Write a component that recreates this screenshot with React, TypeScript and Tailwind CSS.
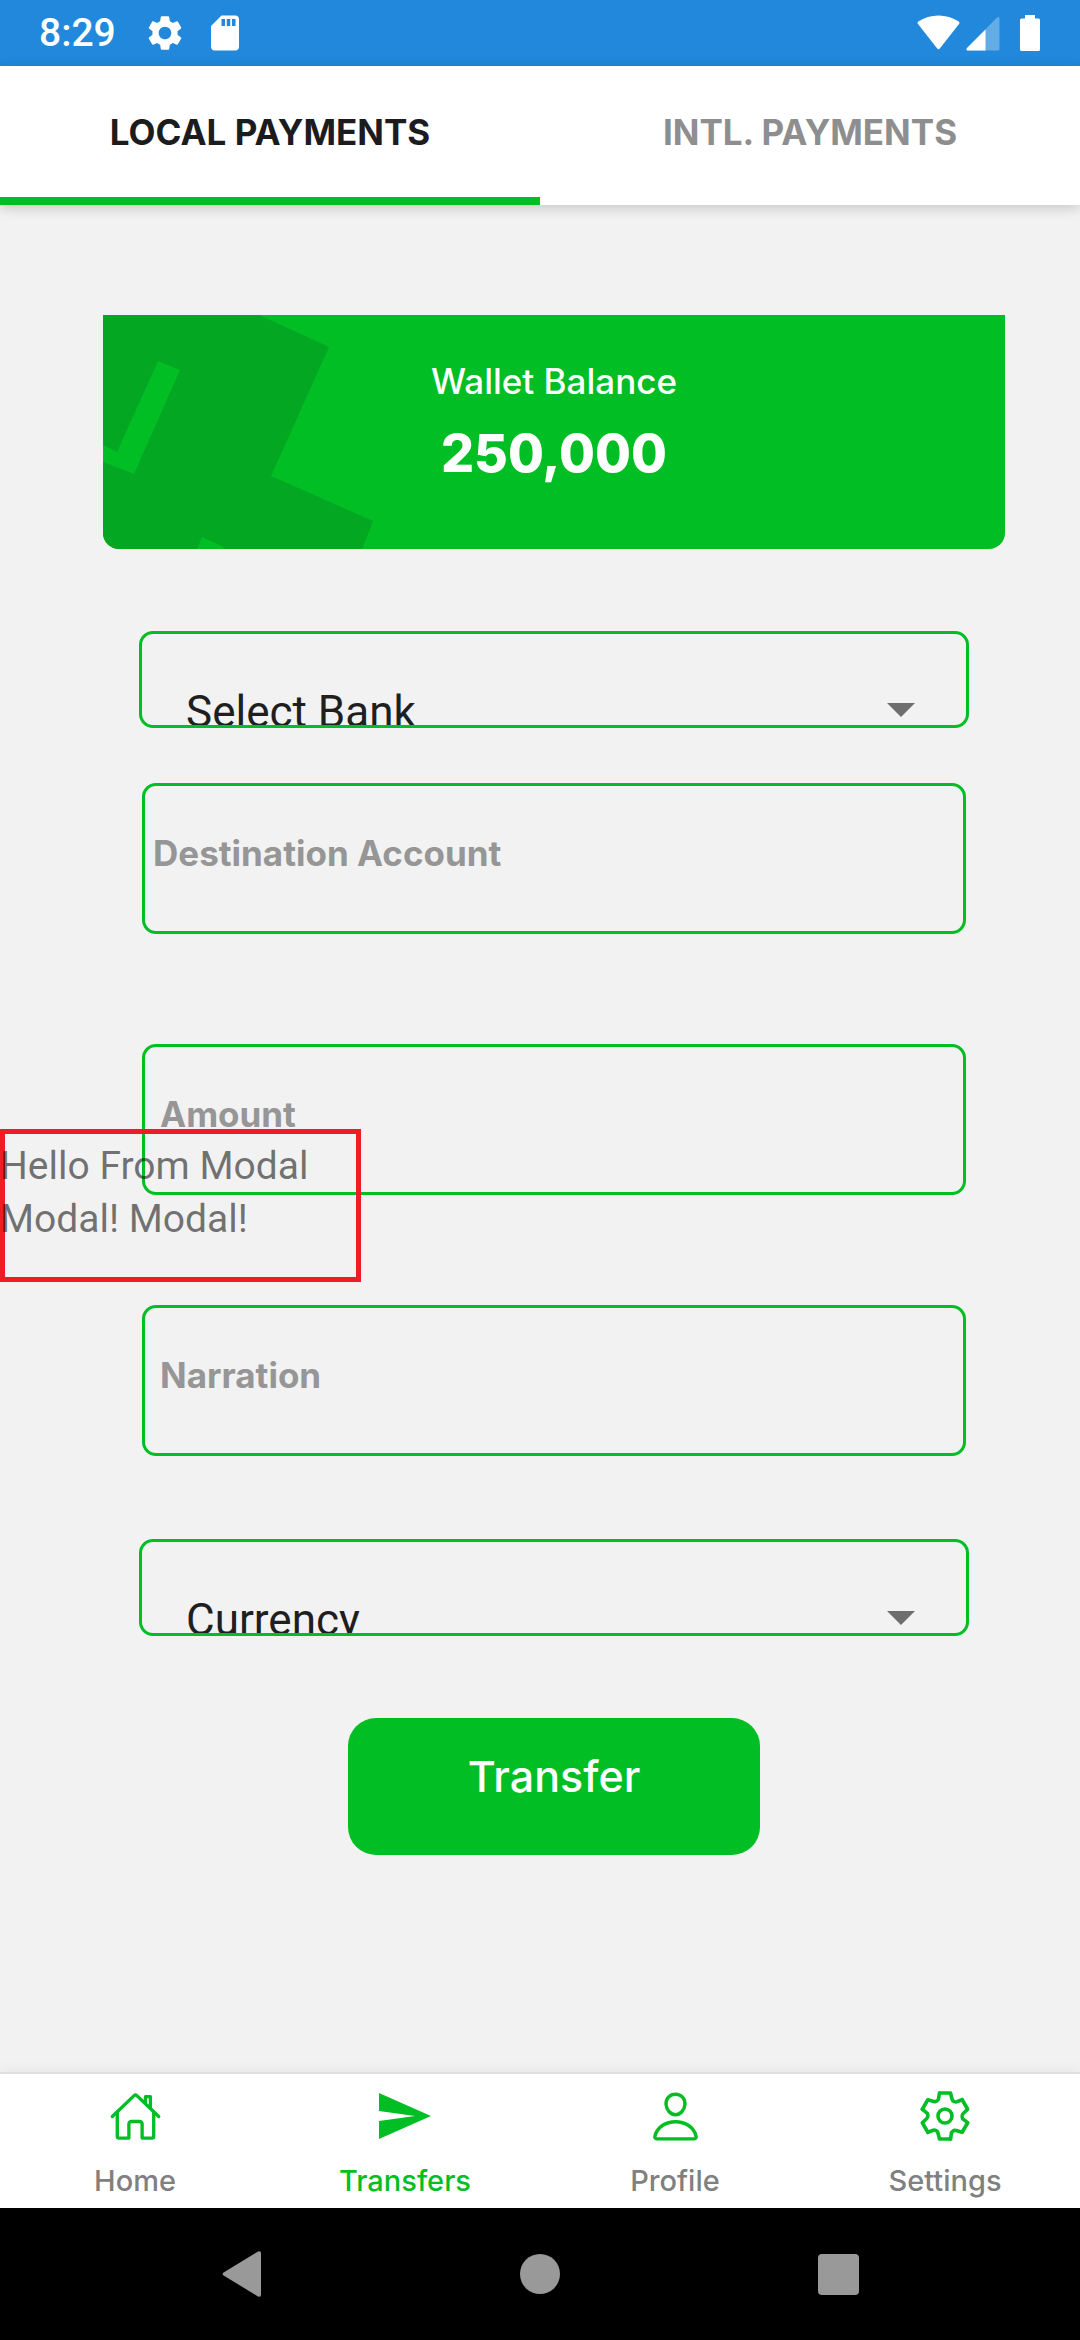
import { useState, type ReactNode } from "react";
import { IoHomeOutline, IoPersonOutline } from "react-icons/io5";
import { MdSdCard, MdSettings } from "react-icons/md";

function StatusBar() {
  return (
    <header className="flex h-[66px] items-center bg-[#2188dc] pr-[40px] pl-[39px] text-white">
      <span className="font-[Roboto] text-[39px] leading-none font-medium">8:29</span>
      <MdSettings className="ml-[28px] size-[42px]" aria-hidden="true" />
      <MdSdCard className="ml-[18px] size-[42px]" aria-hidden="true" />
      <div className="ml-auto flex items-center gap-[6px]" aria-hidden="true">
        <svg width="43" height="36" viewBox="0 0 43 36" fill="currentColor">
          <path d="M1 9C.3 8.100.4 7.300 1.300 6.600 13-1.500 30-1.500 41.700 6.600 42.600 7.300 42.700 8.100 42 9L23 33.300Q21.500 35 20 33.300Z" />
        </svg>
        <svg width="34" height="36" viewBox="0 0 34 36" fill="currentColor">
          <path opacity=".3" d="M31 2.500Q33.500 1 33.500 4V34Q33.500 35.500 32 35.500H2Q-.5 35.500 1 33Z" />
          <path d="M19.500 14.500V35.500H2Q-.5 35.500 1 33Z" />
        </svg>
        <svg className="ml-[14px]" width="20" height="36" viewBox="0 0 20 36" fill="currentColor">
          <path d="M5 0H15V3.500H18.500Q20 3.500 20 5V34.500Q20 36 18.500 36H1.500Q0 36 0 34.500V5Q0 3.500 1.500 3.500H5Z" />
        </svg>
      </div>
    </header>
  );
}

const TABS = ["LOCAL PAYMENTS", "INTL. PAYMENTS"];

function TopTabs() {
  const [active, setActive] = useState(0);
  return (
    <div
      role="tablist"
      className="relative grid h-[139px] grid-cols-2 bg-white shadow-[0_3px_12px_rgba(0,0,0,0.18)]"
    >
      {TABS.map((label, i) => (
        <button
          key={label}
          type="button"
          role="tab"
          aria-selected={i === active}
          onClick={() => setActive(i)}
          className={
            i === active
              ? "border-b-8 border-[#00be24] pt-[2px] text-[35px] font-bold text-[#1c1c1e]"
              : "border-b-8 border-transparent pt-[2px] text-[35px] font-bold text-[#8e8e8f]"
          }
        >
          {label}
        </button>
      ))}
    </div>
  );
}

function WalletCard() {
  return (
    <section className="relative h-[234px] overflow-hidden rounded-b-2xl bg-[#00be24] text-center text-white">
      <svg
        className="absolute top-0 left-0"
        width="280"
        height="234"
        viewBox="0 0 280 234"
        fill="#03a722"
        fillRule="evenodd"
        aria-hidden="true"
      >
        <path d="M0 0H156L226 32 168 161 270 206 259 234H120L121 232 99 222 94 234H0V147L31 159 77 55 55 46 14 137 0 130Z" />
      </svg>
      <div className="relative pt-[43px]">
        <h2 className="text-[35px] leading-[46px] font-medium">Wallet Balance</h2>
        <p className="mt-[21px] text-[52px] leading-[58px] font-extrabold">250,000</p>
      </div>
    </section>
  );
}

function Picker({ label, options }: { label: string; options: string[] }) {
  return (
    <div className="relative h-[97px] overflow-hidden rounded-[14px] border-3 border-[#00be24]">
      <select
        aria-label={label}
        className="block h-[156px] w-full appearance-none bg-transparent px-[44px] font-[Roboto] text-[44px] text-[#1f1f1f] outline-none"
      >
        <option>{label}</option>
        {options.map((o) => (
          <option key={o}>{o}</option>
        ))}
      </select>
      <svg
        className="pointer-events-none absolute top-[69px] right-[51px]"
        width="28"
        height="14"
        viewBox="0 0 28 14"
        fill="#6e6e6e"
        aria-hidden="true"
      >
        <path d="M0 0H28L14 14Z" />
      </svg>
    </div>
  );
}

function Field({ label, tight = false }: { label: string; tight?: boolean }) {
  return (
    <input
      type="text"
      aria-label={label}
      placeholder={label}
      className={
        "mx-[3px] block h-[151px] rounded-[14px] border-3 border-[#00be24] bg-transparent pb-[11px] text-[35px] font-bold text-[#1f1f1f] outline-none placeholder:text-[#969696] placeholder:opacity-100 " +
        (tight ? "pl-[8px]" : "pl-[15px]")
      }
    />
  );
}

function SendIcon() {
  return (
    <svg width="52" height="46" viewBox="0 0 52 46" fill="currentColor" aria-hidden="true">
      <path d="M0 0 52 23 0 46V28L36 23 0 18Z" />
    </svg>
  );
}

function GearIcon() {
  return (
    <svg
      width="54"
      height="54"
      viewBox="-27 -27 54 54"
      fill="none"
      stroke="currentColor"
      strokeWidth="3.600"
      strokeLinejoin="round"
      strokeLinecap="round"
      aria-hidden="true"
    >
      <circle r="7" />
      {[0, 60, 120, 180, 240, 300].map((angle) => (
        <path
          key={angle}
          transform={`rotate(${angle})`}
          d="M-5.500-23H5.500L7-17Q7.500-15 9-14.500Q11-13.500 12.500-14.500L17.100-16.300"
        />
      ))}
    </svg>
  );
}

const NAV: { label: string; icon: ReactNode; active?: boolean }[] = [
  { label: "Home", icon: <IoHomeOutline className="size-[53px]" aria-hidden="true" /> },
  { label: "Transfers", icon: <SendIcon />, active: true },
  { label: "Profile", icon: <IoPersonOutline className="size-[55px]" aria-hidden="true" /> },
  { label: "Settings", icon: <GearIcon /> },
];

function BottomNav() {
  return (
    <nav className="relative grid h-[136px] grid-cols-4 border-t-2 border-[#e0e0e0] bg-white shadow-[0_-2px_12px_rgba(0,0,0,0.05)]">
      {NAV.map(({ label, icon, active }) => (
        <a key={label} href={"#" + label.toLowerCase()} className="flex flex-col items-center pt-[14px]">
          <span className="flex h-[56px] items-center text-[#00be24]">{icon}</span>
          <span
            className={
              active
                ? "mt-[17px] text-[29px] leading-[40px] font-medium text-[#00be24]"
                : "mt-[17px] text-[29px] leading-[40px] font-medium text-[#808080]"
            }
          >
            {label}
          </span>
        </a>
      ))}
    </nav>
  );
}

function SystemBar() {
  return (
    <footer className="flex h-[132px] items-center justify-center gap-[258px] bg-black text-[#999]">
      <button type="button" aria-label="Back">
        <svg width="40" height="46" viewBox="0 0 40 46" fill="currentColor">
          <path d="M2 21.200 36 .6Q39-.8 39 2.500V43.500Q39 46.800 36 45.400L2 24.800Q-.8 23 2 21.200Z" />
        </svg>
      </button>
      <button type="button" aria-label="Home" className="size-[40px] rounded-full bg-[#999]" />
      <button type="button" aria-label="Recent apps" className="size-[41px] rounded-[4px] bg-[#999]" />
    </footer>
  );
}

export default function App() {
  return (
    <div className="flex min-h-screen flex-col bg-[#f2f2f2] font-[Inter,sans-serif]">
      <StatusBar />
      <TopTabs />
      <main className="relative flex-1 pt-[110px] pr-[75px] pb-8 pl-[103px]">
        <WalletCard />
        <form className="flex flex-col px-[36px] pt-[82px]" onSubmit={(e) => e.preventDefault()}>
          <Picker label="Select Bank" options={["Savings Bank", "Commercial Bank"]} />
          <div className="mt-[55px] mb-[83px] flex flex-col gap-[110px]">
            <Field label="Destination Account" tight />
            <Field label="Amount" />
            <Field label="Narration" />
          </div>
          <Picker label="Currency" options={["NGN", "USD"]} />
          <button
            type="submit"
            className="mt-[82px] h-[137px] w-[412px] self-center rounded-[28px] bg-[#00be24] pb-[20px] text-[43px] font-medium text-white"
          >
            Transfer
          </button>
        </form>
        <div
          role="dialog"
          aria-label="Modal"
          className="absolute top-[924px] left-0 h-[153px] w-[361px] border-5 border-[#ee1c24]"
        >
          <p className="-ml-[5px] pt-[6px] font-[Roboto] text-[39px] leading-[53px] text-black/55">
            Hello From Modal Modal! Modal!
          </p>
        </div>
      </main>
      <BottomNav />
      <SystemBar />
    </div>
  );
}
